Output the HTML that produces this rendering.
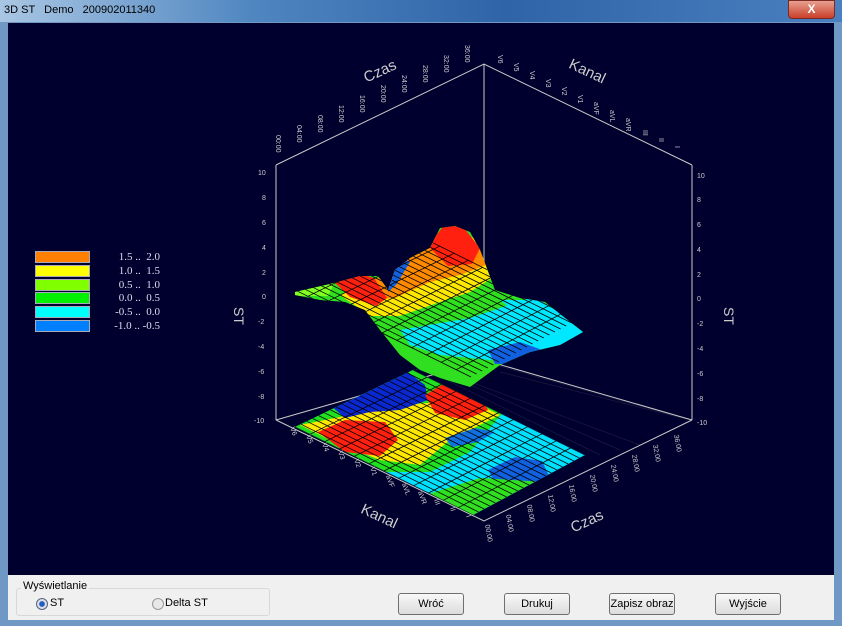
<!DOCTYPE html>
<html><head><meta charset="utf-8"><style>
body{margin:0;width:842px;height:626px;overflow:hidden;background:#6f98c4;font-family:"Liberation Sans",sans-serif}
.title{position:absolute;left:0;top:0;width:842px;height:22px;background:linear-gradient(90deg,#a9c6e4,#4f86c0 30%,#2f64a8 60%,#4a80bf);}
.title span{position:absolute;left:4px;top:4px;font-size:11px;color:#000}
.x{position:absolute;left:788px;top:0;width:45px;height:17px;background:linear-gradient(#e8a090,#c8402a);border:1px solid #7a2a20;border-radius:0 0 4px 4px;color:#fff;font-weight:bold;text-align:center;font-size:12px;line-height:16px}
.plot{position:absolute;left:8px;top:23px;width:826px;height:552px;background:#00002e}
.panel{position:absolute;left:8px;top:575px;width:826px;height:45px;background:#f0f0f0}
.btn{position:absolute;top:18px;height:20px;border:1px solid #6f6f6f;border-radius:3px;background:linear-gradient(#f8f8f8,#dcdcdc);font-size:11px;text-align:center;line-height:20px}
.leg{position:absolute;left:35px;width:53px;height:10px;border:1px solid #aab}
.lt{position:absolute;left:100px;font-family:"Liberation Serif",serif;font-size:11px;color:#dde;width:60px;text-align:right}
</style></head><body>
<div class="title"><span>3D ST &nbsp; Demo &nbsp; 200902011340</span></div>
<div class="x">X</div>
<div class="plot">
<svg width="826" height="552" viewBox="8 23 826 552" style="position:absolute;left:0;top:0">
<defs>
<clipPath id="cf"><polygon points="295,427 413,370 585,455 473,515"/></clipPath>
<clipPath id="cs"><polygon points="295,292 330,284 360,276 378,276 388,290 395,270 410,258 430,248 440,228 455,226 470,232 480,250 495,290 520,298 545,302 565,318 583,332 560,345 530,352 500,365 470,387 440,378 420,370 400,355 380,330 365,310 345,302 320,300 295,295"/></clipPath>
<g id="mesh" stroke="#000" stroke-width="0.8" fill="none">
<path d="M295 427L473 515M300.9 424.2L478.6 512M306.8 421.3L484.2 509M312.7 418.5L489.8 506M318.6 415.6L495.4 503M324.5 412.8L501 500M330.4 409.9L506.6 497M336.3 407L512.2 494M342.2 404.2L517.8 491M348.1 401.4L523.4 488M354 398.5L529 485M359.9 395.7L534.6 482M365.8 392.8L540.2 479M371.7 390L545.8 476M377.6 387.1L551.4 473M383.5 384.3L557 470M389.4 381.4L562.6 467M395.3 378.6L568.2 464M401.2 375.7L573.8 461M407.1 372.9L579.4 458M413 370L585 455"/>
<path d="M309.8 434.3L427.3 377.1M324.7 441.7L441.7 384.2M339.5 449L456 391.3M354.3 456.3L470.3 398.3M369.2 463.7L484.7 405.4M384 471L499 412.5M398.8 478.3L513.3 419.6M413.7 485.7L527.7 426.7M428.5 493L542 433.8M443.3 500.3L556.3 440.8M458.2 507.7L570.7 447.9"/>
</g>
</defs>
<!-- dark floor mesh on rest -->
<g stroke="#1a1a40" stroke-width="0.7" fill="none">
<path d="M420 367L600 455M440 372L620 450M460 378L640 445M485 362L690 420M413 370L485 360M500 372L690 420"/>
</g>
<g stroke="#c8c8c8" stroke-width="1" fill="none">
<path d="M276 165 L484 64 L692 165 M276 165 L276 420 M484 64 L484 360 M692 165 L692 420 M276 420 L484 360 L692 420"/>
<path d="M276 420 L484 521 L692 420"/>
</g>
<!-- floor heatmap -->
<g clip-path="url(#cf)">
<polygon points="280,300 700,300 700,560 280,560" fill="#00e0ff"/>
<polygon points="280,420 413,360 505,410 470,452 430,472 380,472" fill="#20e020"/>
<polygon points="300,425 400,405 470,400 500,415 450,440 420,465 380,460 330,440" fill="#ffe800"/>
<polygon points="318,432 345,420 385,422 398,440 380,456 345,452" fill="#ff2010"/>
<polygon points="330,405 360,390 405,370 425,385 428,400 400,410 370,412 345,418" fill="#0a28d0"/>
<polygon points="425,395 445,383 478,393 488,410 465,420 435,413" fill="#ff2010"/>
<polygon points="445,438 475,428 495,432 478,442 452,447" fill="#1070e0"/>
<polygon points="488,470 515,457 542,461 550,478 520,486 495,482" fill="#1060e0"/>
<polygon points="425,495 480,478 545,482 560,500 473,520" fill="#30e020"/>
<use href="#mesh"/>
</g>
<!-- surface -->
<g clip-path="url(#cs)">
<rect x="280" y="200" width="320" height="200" fill="#30e020"/>
<polygon points="400,330 470,318 530,298 590,332 560,345 520,355 490,360 440,355 410,345" fill="#00e8ff"/>
<polygon points="488,350 520,342 548,352 520,364 495,364" fill="#1060e0"/>
<polygon points="500,300 540,300 570,320 540,330" fill="#00e8ff"/>
<polygon points="340,295 378,280 410,260 440,232 475,238 492,278 470,292 440,302 400,316 370,316" fill="#ffe800"/>
<polygon points="345,290 378,278 420,252 445,232 478,245 486,265 460,275 430,282 395,298 360,300" fill="#ff8a00"/>
<polygon points="428,246 445,224 464,228 480,248 472,264 448,266" fill="#ff2010"/>
<polygon points="335,283 360,274 374,278 387,298 376,306 350,297" fill="#ff2010"/>
<polygon points="385,268 402,258 410,262 396,285 388,292" fill="#1060e0"/>
<polygon points="290,288 335,282 328,296 290,296" fill="#80ff20"/>
<use href="#mesh" transform="translate(-2,-138)"/>
</g>
<g font-size="7" fill="#ccc" font-family="Liberation Sans">
<text x="258" y="175">10</text><text x="262" y="200">8</text><text x="262" y="225">6</text><text x="262" y="250">4</text><text x="262" y="275">2</text><text x="262" y="299">0</text><text x="258" y="324">-2</text><text x="258" y="349">-4</text><text x="258" y="374">-6</text><text x="258" y="399">-8</text><text x="254" y="423">-10</text>
<text x="697" y="178">10</text><text x="697" y="202">8</text><text x="697" y="227">6</text><text x="697" y="252">4</text><text x="697" y="277">2</text><text x="697" y="301">0</text><text x="697" y="326">-2</text><text x="697" y="351">-4</text><text x="697" y="376">-6</text><text x="697" y="401">-8</text><text x="697" y="425">-10</text>
<text transform="translate(276,135) rotate(90)">00:00</text><text transform="translate(297,125) rotate(90)">04:00</text><text transform="translate(318,115) rotate(90)">08:00</text><text transform="translate(339,105) rotate(90)">12:00</text><text transform="translate(360,95) rotate(90)">16:00</text><text transform="translate(381,85) rotate(90)">20:00</text><text transform="translate(402,75) rotate(90)">24:00</text><text transform="translate(423,65) rotate(90)">28:00</text><text transform="translate(444,55) rotate(90)">32:00</text><text transform="translate(465,45) rotate(90)">36:00</text>
<text transform="translate(498,55) rotate(90)">V6</text><text transform="translate(514,63) rotate(90)">V5</text><text transform="translate(530,71) rotate(90)">V4</text><text transform="translate(546,79) rotate(90)">V3</text><text transform="translate(562,87) rotate(90)">V2</text><text transform="translate(578,95) rotate(90)">V1</text><text transform="translate(594,102) rotate(90)">aVF</text><text transform="translate(610,110) rotate(90)">aVL</text><text transform="translate(626,118) rotate(90)">aVR</text><text transform="translate(643,130) rotate(90)">III</text><text transform="translate(659,138) rotate(90)">II</text><text transform="translate(675,146) rotate(90)">I</text>
<text transform="translate(290,428) rotate(70)">V6</text><text transform="translate(306,436) rotate(70)">V5</text><text transform="translate(322,444) rotate(70)">V4</text><text transform="translate(338,452) rotate(70)">V3</text><text transform="translate(354,460) rotate(70)">V2</text><text transform="translate(370,468) rotate(70)">V1</text><text transform="translate(386,476) rotate(70)">aVF</text><text transform="translate(402,484) rotate(70)">aVL</text><text transform="translate(418,492) rotate(70)">aVR</text><text transform="translate(434,500) rotate(70)">III</text><text transform="translate(450,508) rotate(70)">II</text><text transform="translate(466,516) rotate(70)">I</text>
<text transform="translate(485,525) rotate(80)">00:00</text><text transform="translate(506,515) rotate(80)">04:00</text><text transform="translate(527,505) rotate(80)">08:00</text><text transform="translate(548,495) rotate(80)">12:00</text><text transform="translate(569,485) rotate(80)">16:00</text><text transform="translate(590,475) rotate(80)">20:00</text><text transform="translate(611,465) rotate(80)">24:00</text><text transform="translate(632,455) rotate(80)">28:00</text><text transform="translate(653,445) rotate(80)">32:00</text><text transform="translate(674,435) rotate(80)">36:00</text>
</g>
</svg>
<div style="position:absolute;left:355px;top:40px;color:#ccc;font-size:15px;transform:rotate(-25deg)">Czas</div>
<div style="position:absolute;left:560px;top:40px;color:#ccc;font-size:15px;transform:rotate(25deg)">Kanal</div>
<div style="position:absolute;left:352px;top:485px;color:#ccc;font-size:15px;transform:rotate(25deg)">Kanal</div>
<div style="position:absolute;left:562px;top:490px;color:#ccc;font-size:15px;transform:rotate(-25deg)">Czas</div>
<div style="position:absolute;left:222px;top:285px;color:#ccc;font-size:14px;transform:rotate(90deg)">ST</div>
<div style="position:absolute;left:712px;top:285px;color:#ccc;font-size:14px;transform:rotate(90deg)">ST</div>
</div>
<div class="leg" style="top:251px;background:#ff8000"></div><div class="lt" style="top:251px">1.5 .. &nbsp;2.0</div>
<div class="leg" style="top:265px;background:#ffff00"></div><div class="lt" style="top:265px">1.0 .. &nbsp;1.5</div>
<div class="leg" style="top:279px;background:#80ff00"></div><div class="lt" style="top:279px">0.5 .. &nbsp;1.0</div>
<div class="leg" style="top:292px;background:#00f000"></div><div class="lt" style="top:292px">0.0 .. &nbsp;0.5</div>
<div class="leg" style="top:306px;background:#00ffff"></div><div class="lt" style="top:306px">-0.5 .. &nbsp;0.0</div>
<div class="leg" style="top:320px;background:#0080ff"></div><div class="lt" style="top:320px">-1.0 .. -0.5</div>
<div class="panel">
<div style="position:absolute;left:8px;top:13px;width:252px;height:26px;border:1px solid #d8d8d8;border-radius:3px"></div>
<div style="position:absolute;left:13px;top:5px;font-size:11px;background:#f0f0f0;padding:0 2px">Wyświetlanie</div>
<div style="position:absolute;left:28px;top:23px;width:10px;height:10px;border-radius:50%;border:1px solid #567;background:radial-gradient(#1e5fc0 35%,#dde 45%)"></div>
<div style="position:absolute;left:42px;top:22px;font-size:11px">ST</div>
<div style="position:absolute;left:144px;top:23px;width:10px;height:10px;border-radius:50%;border:1px solid #999;background:#e8e8e8"></div>
<div style="position:absolute;left:157px;top:22px;font-size:11px">Delta ST</div>
<div class="btn" style="left:390px;width:64px">Wróć</div>
<div class="btn" style="left:496px;width:64px">Drukuj</div>
<div class="btn" style="left:601px;width:64px">Zapisz obraz</div>
<div class="btn" style="left:707px;width:64px">Wyjście</div>
</div>
</body></html>
